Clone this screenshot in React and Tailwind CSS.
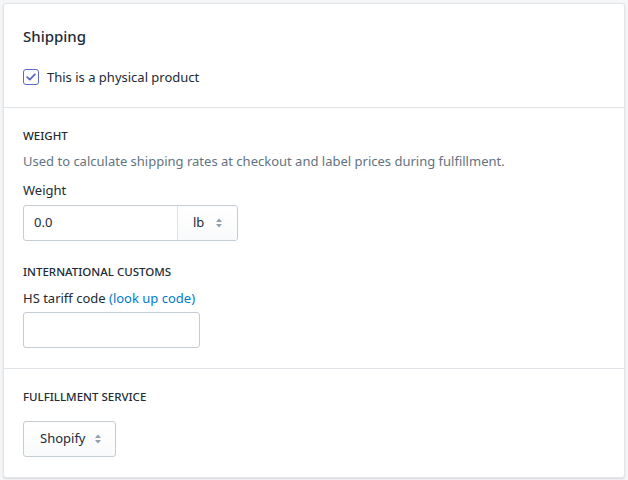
import React from 'react';

const Stepper = () => (
  <svg width="8" height="12" viewBox="0 0 8 12" className="text-[#919eab]" fill="currentColor">
    <path d="M4 1.5 7 5H1z" />
    <path d="M4 10.5 1 7h6z" />
  </svg>
);

const Heading = ({ children }) => (
  <h3 className="text-[11.5px] font-medium uppercase text-[#212b36] leading-4">{children}</h3>
);

export default function App() {
  return (
    <div
      className="min-h-[480px] bg-[#f4f6f8] px-[3px] pt-[3px]"
      style={{ fontFamily: '"Noto Sans", "Open Sans", sans-serif' }}
    >
      {/* card */}
      <div className="bg-white rounded-[3px] border border-[#e3e5e8] shadow-[0_1px_2px_rgba(63,63,68,0.15)] text-[13px] text-[#212b36]">
        {/* Shipping */}
        <div className="px-[19px] pt-5 pb-5">
          <h2 className="text-[15px] font-medium leading-6">Shipping</h2>
          <label className="mt-[19px] flex items-center gap-2 leading-5">
            <span className="w-4 h-4 rounded-[3px] border border-[#5c6ac4] flex items-center justify-center bg-white">
              <svg width="10" height="8" viewBox="0 0 10 8" fill="none" stroke="#5c6ac4" strokeWidth="1.8" strokeLinecap="round" strokeLinejoin="round">
                <path d="M1.2 4.2 3.8 6.6 8.8 1.4" />
              </svg>
            </span>
            <span>This is a physical product</span>
          </label>
        </div>

        {/* Weight / customs */}
        <div className="border-t border-[#dfe3e8] px-[19px] pt-5 pb-5">
          <Heading>Weight</Heading>
          <p className="mt-[7px] text-[#637381] leading-5">
            Used to calculate shipping rates at checkout and label prices during fulfillment.
          </p>
          <div className="mt-[9px] leading-5">Weight</div>
          <div className="mt-[5px] flex w-[215px] h-[36px] border border-[#c4cdd5] rounded-[3px]">
            <div className="w-[154px] flex items-center px-[10px] border-r border-[#dfe3e8]">0.0</div>
            <div className="flex-1 flex items-center justify-between pl-[15px] pr-[14px] bg-gradient-to-b from-white to-[#f9fafb] rounded-r-[3px]">
              <span>lb</span>
              <Stepper />
            </div>
          </div>

          <div className="mt-[23px]">
            <Heading>International customs</Heading>
          </div>
          <div className="mt-2 leading-5">
            HS tariff code <span className="text-[#007ace]">(look up code)</span>
          </div>
          <div className="mt-1 w-[177px] h-[36px] border border-[#c4cdd5] rounded-[3px]" />
        </div>

        {/* Fulfillment */}
        <div className="border-t border-[#dfe3e8] px-[19px] pt-5 pb-5">
          <Heading>Fulfillment service</Heading>
          <div className="mt-4 inline-flex items-center gap-2 h-[36px] pl-4 pr-[13px] border border-[#c4cdd5] rounded-[3px] bg-gradient-to-b from-white to-[#f9fafb]">
            <span>Shopify</span>
            <Stepper />
          </div>
        </div>
      </div>
    </div>
  );
}
